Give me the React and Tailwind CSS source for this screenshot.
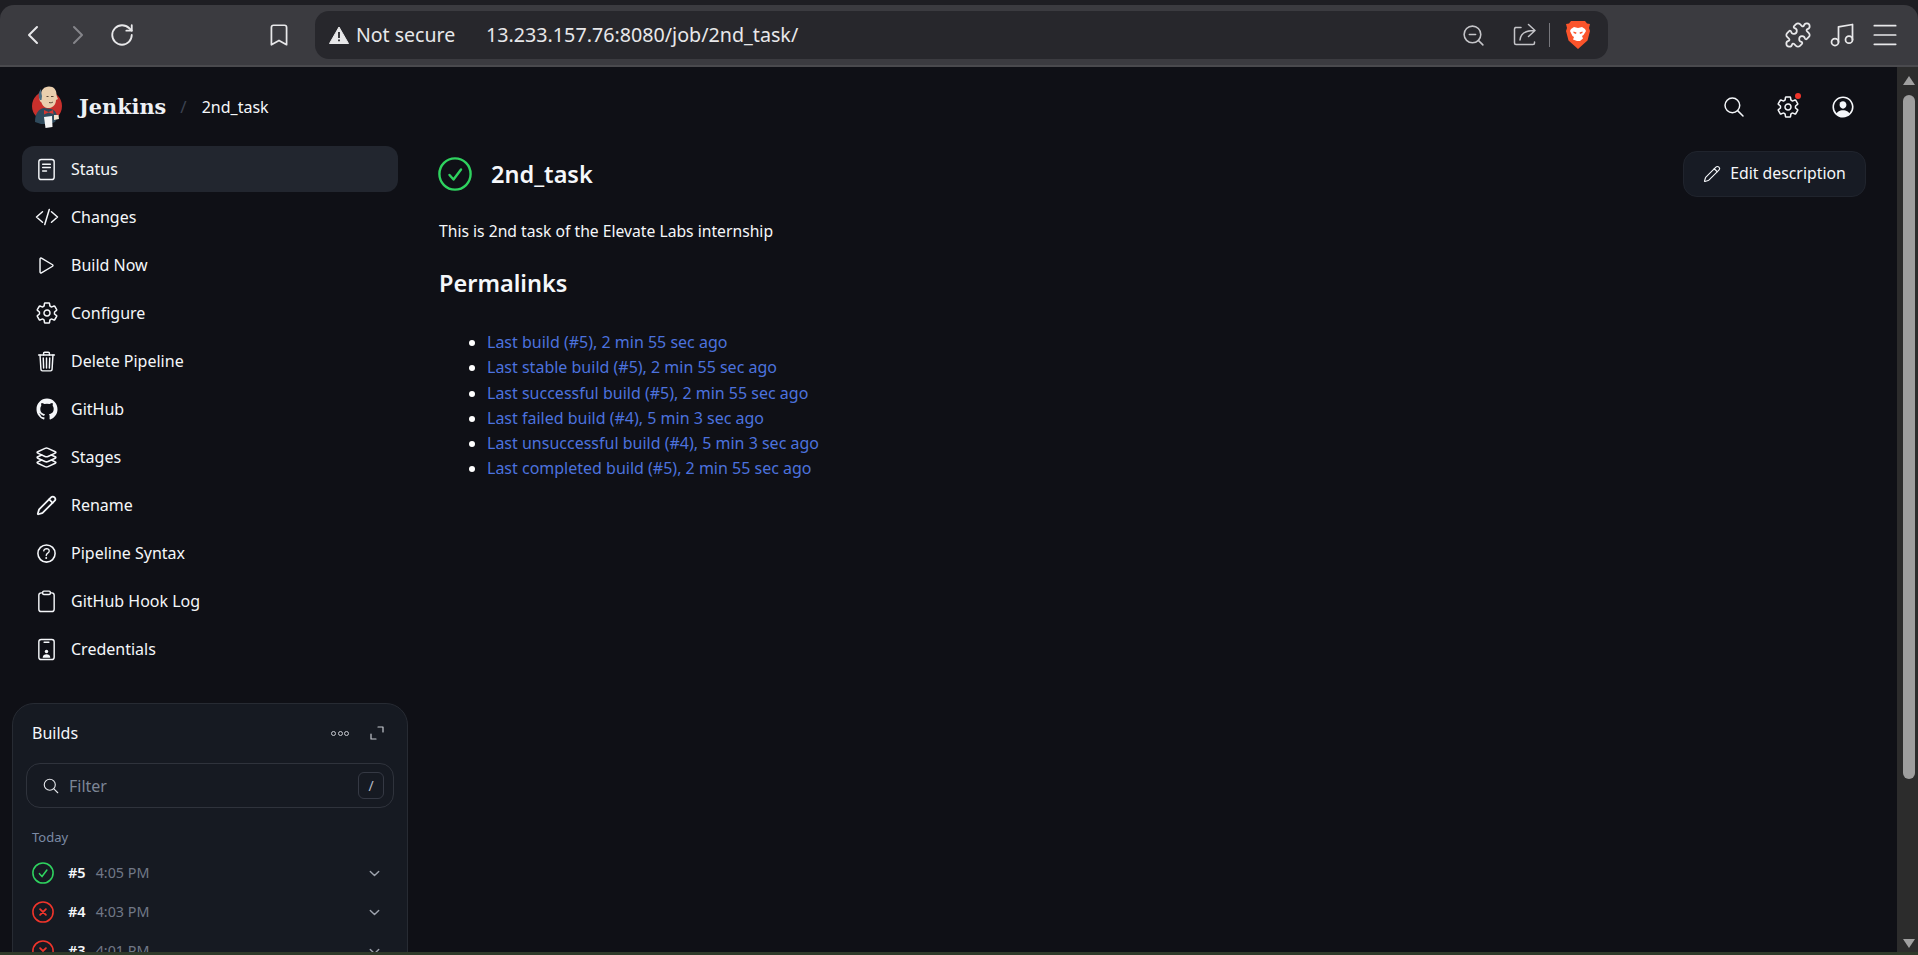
import React from "react";
import { ChevronLeft, ChevronRight, RotateCw, Bookmark, ZoomOut, Puzzle, Music, Menu, Pencil } from "lucide-react";
import {
  IoCodeSlashOutline, IoPlayOutline, IoSettingsOutline, IoTrashOutline, IoLogoGithub, IoLayersOutline,
  IoHelpCircleOutline, IoSearchOutline, IoPersonCircleOutline, IoChevronDownOutline,
} from "react-icons/io5";

const font = { fontFamily: '"Noto Sans", sans-serif' };

function StatusIcon({ className }) {
  return (
    <svg viewBox="0 0 24 24" fill="none" stroke="currentColor" strokeWidth="1.5" strokeLinecap="round" className={className}>
      <rect x="4" y="1.5" width="16" height="21" rx="2.5" />
      <path d="M8 6.500h8M8 10h8M8 13.500h4" />
    </svg>
  );
}

function ClipboardIcon({ className }) {
  return (
    <svg viewBox="0 0 24 24" fill="none" stroke="currentColor" strokeWidth="1.5" strokeLinecap="round" className={className}>
      <rect x="4" y="3" width="16" height="19.500" rx="2.500" />
      <rect x="8" y="1.200" width="8" height="3.400" rx="1.200" fill="#0f1016" />
    </svg>
  );
}

function CredentialsIcon({ className }) {
  return (
    <svg viewBox="0 0 24 24" fill="none" stroke="currentColor" strokeWidth="1.5" strokeLinecap="round" className={className}>
      <rect x="4" y="1.500" width="16" height="21" rx="2.500" />
      <path d="M9.500 4.500h5" />
      <circle cx="12" cy="14" r="1.800" fill="currentColor" stroke="none" />
      <path d="M8 20.500c.3-2.600 1.800-3.600 4-3.600s3.700 1 4 3.600z" fill="currentColor" stroke="none" />
    </svg>
  );
}

function CheckCircle({ className }) {
  return (
    <svg viewBox="0 0 34 34" fill="none" stroke="#2fd25f" strokeWidth="2.400" strokeLinecap="round" strokeLinejoin="round" className={className}>
      <circle cx="17" cy="17" r="15.600" />
      <path d="M11.500 18l4 4.500 7.500-10" />
    </svg>
  );
}

function FailCircle({ className }) {
  return (
    <svg viewBox="0 0 34 34" fill="none" stroke="#f0352b" strokeWidth="2.400" strokeLinecap="round" className={className}>
      <circle cx="17" cy="17" r="15.600" />
      <path d="M12.500 12.500l9 9M21.500 12.500l-9 9" strokeWidth="2.800" />
    </svg>
  );
}

function ExpandCorners({ className }) {
  return (
    <svg viewBox="0 0 14 14" fill="none" stroke="currentColor" strokeWidth="1.200" strokeLinecap="round" strokeLinejoin="round" className={className}>
      <path d="M8 1h5v5M1 8v5h5" />
    </svg>
  );
}

function ShareIcon({ className }) {
  return (
    <svg viewBox="0 0 24 24" fill="none" stroke="currentColor" strokeWidth="1.500" strokeLinecap="round" strokeLinejoin="round" className={className}>
      <path d="M9 4.500H3.500a2 2 0 0 0-1 1.500v14a1.500 1.500 0 0 0 1.500 1.500h17a1.500 1.500 0 0 0 1.500-1.500v-1" />
      <path d="M8 17c.5-6 5-9.500 14-9.500M16.500 1.500L23 7.500l-6.500 6" />
    </svg>
  );
}

function JenkinsLogo() {
  return (
    <svg viewBox="0 0 30 42" className="w-[30px] h-[42px]">
      <circle cx="15" cy="20" r="15" fill="#c9302c" />
      <path d="M3 36c0-8 3-13 9-14l7 1c4 1 6 4 6 9l-2 4-5 2H9z" fill="#2f4a5c" />
      <path d="M9 9C9 4 12 .5 17 .5s7.500 3.500 7.500 8c0 1.500 1 3 1.500 4.500l-2 1c0 4-2.500 7.500-6.500 8-4 .5-7-2-8-5.500C8 16 7 13.500 7.500 11.500z" fill="#eacfae" />
      <path d="M8 14c-2-4-1.500-8 1-11 .3 2.500.5 5 1 7l-.5 4z" fill="#4a6c82" />
      <path d="M19 10.500h2.500M14.500 10.500h2M17 16.500c1.500.5 3 .3 4-.5" stroke="#5b4636" strokeWidth="1" fill="none" />
      <path d="M12 24l4.500 2 4.500-2 .5 4-5-1.500-4.500 2z" fill="#d33833" />
      <path d="M12 31l8-1 .5 11-7 1z" fill="#f4f4f4" />
      <path d="M22 29h4.500l.5 4-5 1z" fill="#f0e2cd" />
    </svg>
  );
}

function BraveLogo() {
  return (
    <svg viewBox="0 0 24 28" className="w-[24px] h-[28px]">
      <path d="M5 0h14l2 2.500 3 .5-1 4 1 3-2.500 9.500L12 28l-9.500-8.500L0 10l1-3-1-4 3-.5z" fill="#fb542b" />
      <path d="M5 8l3-2 4 1 4-1 3 2 1 2-2.500 4-1.500 1 1 2.500-3 2.500h-3L7 18.500 8 16l-1.500-1L4 10z" fill="#fff" />
      <path d="M7.500 10.500l3 1-.5 1.500-2.500-1zM16.500 10.500l-3 1 .5 1.500 2.500-1z" fill="#fb542b" />
    </svg>
  );
}

const nav = [
  ["Status", StatusIcon, "w-[23px] h-[23px]"],
  ["Changes", IoCodeSlashOutline, "w-[24px] h-[24px] -mr-[1px]"],
  ["Build Now", IoPlayOutline, "w-[23px] h-[23px]"],
  ["Configure", IoSettingsOutline, "w-[24px] h-[24px] -mr-[1px]"],
  ["Delete Pipeline", IoTrashOutline, "w-[23px] h-[23px]"],
  ["GitHub", IoLogoGithub, "w-[24px] h-[24px] -mr-[1px]"],
  ["Stages", IoLayersOutline, "w-[25px] h-[25px] -mx-[1px]"],
  ["Rename", Pencil, "w-[21px] h-[21px] mx-[1px]"],
  ["Pipeline Syntax", IoHelpCircleOutline, "w-[25px] h-[25px] -mx-[1px]"],
  ["GitHub Hook Log", ClipboardIcon, "w-[23px] h-[23px]"],
  ["Credentials", CredentialsIcon, "w-[23px] h-[23px]"],
];

const links = [
  "Last build (#5), 2 min 55 sec ago",
  "Last stable build (#5), 2 min 55 sec ago",
  "Last successful build (#5), 2 min 55 sec ago",
  "Last failed build (#4), 5 min 3 sec ago",
  "Last unsuccessful build (#4), 5 min 3 sec ago",
  "Last completed build (#5), 2 min 55 sec ago",
];

const builds = [
  ["#5", "4:05 PM", true],
  ["#4", "4:03 PM", false],
  ["#3", "4:01 PM", false],
];

function BrowserBar() {
  return (
    <div className="bg-[#1e1e23] pt-[5px] shrink-0">
      <div className="h-[62px] bg-[#3b3b40] rounded-t-[14px] border-b-2 border-[#4a4a4e] flex items-center text-[#e8e8ea]">
        <ChevronLeft className="w-8 h-8 ml-[17px]" strokeWidth={1.5} />
        <ChevronRight className="w-8 h-8 ml-[13px] text-[#85858a]" strokeWidth={1.5} />
        <RotateCw className="w-[26px] h-[26px] ml-[15px]" strokeWidth={1.7} />
        <Bookmark className="w-[26px] h-[26px] ml-[131px]" strokeWidth={1.6} />
        <div className="ml-[23px] w-[1293px] h-12 bg-[#27272c] rounded-[14px] flex items-center pl-[14px] pr-[18px]">
          <svg viewBox="0 0 20 18" className="w-5 h-[18px]">
            <path d="M10 1l9.500 16.500H.5z" fill="#e8e8ea" stroke="#e8e8ea" strokeLinejoin="round" />
            <path d="M10 6v6M10 13.500v1.800" stroke="#27272c" strokeWidth="1.800" />
          </svg>
          <span className="ml-[7px] text-[19.500px] w-[130px]" style={font}>Not secure</span>
          <span className="text-[19.700px]" style={font}>13.233.157.76:8080/job/2nd_task/</span>
          <div className="ml-auto flex items-center text-[#c4c4c8]">
            <ZoomOut className="w-[25px] h-[25px]" strokeWidth={1.5} />
            <ShareIcon className="w-6 h-6 ml-[26px]" />
            <div className="w-px h-6 bg-[#77777c] ml-[13px] mr-[16px]" />
            <BraveLogo />
          </div>
        </div>
        <Puzzle className="w-7 h-7 ml-[176px]" strokeWidth={1.5} />
        <Music className="w-7 h-7 ml-[16px]" strokeWidth={1.5} />
        <Menu className="w-8 h-8 ml-[13px]" strokeWidth={1.3} />
      </div>
    </div>
  );
}

function BuildsCard() {
  return (
    <div className="ml-3 mr-2 mt-[31px] bg-[#161a22] border border-[#272b33] rounded-[22px] px-[13px] pt-[17px] pb-4">
      <div className="flex items-center px-[6px] h-[24px] text-[#f5f7fa]">
        <span className="text-[16px]">Builds</span>
        <span className="ml-auto flex gap-[1.500px]">
          <i className="w-[5px] h-[5px] rounded-full border border-[#c6c9d0]" />
          <i className="w-[5px] h-[5px] rounded-full border border-[#c6c9d0]" />
          <i className="w-[5px] h-[5px] rounded-full border border-[#c6c9d0]" />
        </span>
        <ExpandCorners className="w-[14px] h-[14px] ml-[21px] mr-[4px] text-[#c6c9d0]" />
      </div>
      <div className="mt-[18px] h-[45px] border border-[#2f333c] rounded-[14px] flex items-center pl-[15px] pr-[9px]">
        <IoSearchOutline className="w-[18px] h-[18px] text-[#e4e6ea]" />
        <span className="ml-[9px] text-[16px] text-[#7c8595]">Filter</span>
        <span className="ml-auto w-[26px] h-[27px] border border-[#353944] rounded-[6px] flex items-center justify-center text-[14px] text-[#b8bcc5]">/</span>
      </div>
      <p className="mt-[20px] px-[6px] text-[13px] text-[#7c8aa5]">Today</p>
      <div className="mt-[6px]">
        {builds.map(([n, t, ok]) => (
          <div key={n} className="h-[39px] flex items-center px-[6px]">
            {ok ? <CheckCircle className="w-[22px] h-[22px]" /> : <FailCircle className="w-[22px] h-[22px]" />}
            <span className="ml-[14px] text-[14.500px] font-semibold text-[#f5f7fa]">{n}</span>
            <span className="ml-[10px] text-[14.300px] text-[#717887]">{t}</span>
            <IoChevronDownOutline className="ml-auto mr-[6px] w-[15px] h-[15px] text-[#9ea3ad]" />
          </div>
        ))}
      </div>
    </div>
  );
}

export default function App() {
  return (
    <div className="h-[955px] flex flex-col overflow-hidden bg-[#0f1016] text-[#f5f7fa] text-[16px]" style={font}>
      <BrowserBar />
      <div className="flex-1 min-h-0 flex">
        <div className="flex-1 min-w-0 overflow-hidden">
          <header className="h-[79px] flex items-center pl-[32px] pr-[41px]">
            <JenkinsLogo />
            <span className="ml-[17px] text-[20.800px] font-bold text-[#eef1f5]" style={{ fontFamily: '"DejaVu Serif", serif' }}>Jenkins</span>
            <span className="ml-[14px] text-[17px] text-[#3c4250]">/</span>
            <span className="ml-[15px] text-[16px]">2nd_task</span>
            <div className="ml-auto flex items-center gap-[30px]">
              <IoSearchOutline className="w-[24px] h-[24px]" />
              <div className="relative">
                <IoSettingsOutline className="w-[24px] h-[24px]" />
                <span className="absolute -top-[2px] -right-[1px] w-[6px] h-[6px] rounded-full bg-[#f0352b]" />
              </div>
              <IoPersonCircleOutline className="w-[26px] h-[26px]" />
            </div>
          </header>
          <div className="flex">
            <aside className="w-[416px] shrink-0">
              <nav className="ml-[22px] mr-[18px] flex flex-col gap-[2px]">
                {nav.map(([label, Icon, size], i) => (
                  <a key={label} className={`h-[46px] flex items-center rounded-[12px] pl-[13px] ${i === 0 ? "bg-[#22262f]" : ""}`}>
                    <Icon className={size} />
                    <span className="ml-[13px]">{label}</span>
                  </a>
                ))}
              </nav>
              <BuildsCard />
            </aside>
            <main className="flex-1 min-w-0 pl-[23px] pr-[31px]">
              <div className="pt-[5px] flex items-center justify-between">
                <div className="flex items-center">
                  <CheckCircle className="w-[34px] h-[34px] -ml-[1px]" />
                  <h1 className="ml-[19px] mt-[2px] text-[23.500px] font-semibold">2nd_task</h1>
                </div>
                <button className="h-[46px] w-[183px] bg-[#171b24] border border-[#20242d] rounded-[14px] flex items-center justify-center gap-[9px] text-[15.800px]">
                  <Pencil className="w-[18px] h-[18px]" strokeWidth={1.5} />
                  Edit description
                </button>
              </div>
              <p className="mt-[22px] leading-[24px] text-[15.700px]">This is 2nd task of the Elevate Labs internship</p>
              <h2 className="mt-[24px] text-[23.500px] leading-[32px] font-semibold">Permalinks</h2>
              <ul className="mt-[31px] pl-[48px] list-disc marker:text-white leading-[25.300px] text-[#4c72de]">
                {links.map((l) => <li key={l}><a>{l}</a></li>)}
              </ul>
            </main>
          </div>
        </div>
        <div className="w-[21px] shrink-0 bg-[#2c2c2c] flex flex-col items-center pl-[2px]">
          <div className="mt-[9px] w-0 h-0 border-x-[6px] border-x-transparent border-b-[9px] border-b-[#a0a0a0]" />
          <div className="mt-[10px] w-[12px] h-[684px] rounded-full bg-[#9e9e9e]" />
          <div className="mt-auto mb-[4px] w-0 h-0 border-x-[6px] border-x-transparent border-t-[9px] border-t-[#a0a0a0]" />
        </div>
      </div>
      <div className="h-[3px] bg-[#2f3a2a] shrink-0" />
    </div>
  );
}
